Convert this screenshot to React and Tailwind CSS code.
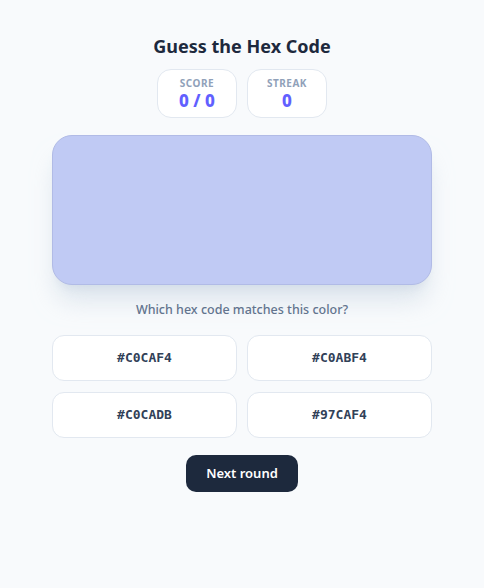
import React, { useState } from "react";

const options = ["#C0CAF4", "#C0ABF4", "#C0CADB", "#97CAF4"];

const Stat = ({ label, value }) => (
  <div className="w-20 h-[49px] bg-white border border-slate-200 rounded-[14px] flex flex-col items-center justify-center">
    <span className="text-[10px] leading-[14px] font-bold tracking-wider text-slate-400">
      {label}
    </span>
    <span className="text-[17px] leading-[21px] font-extrabold text-indigo-500">
      {value}
    </span>
  </div>
);

export default function App() {
  const [score] = useState({ correct: 0, total: 0, streak: 0 });

  return (
    <div
      className="min-h-[588px] bg-slate-50 flex flex-col items-center pt-8"
      style={{ fontFamily: '"Noto Sans", "Open Sans", sans-serif' }}
    >
      <h1 className="text-lg leading-7 font-bold text-slate-800">
        Guess the Hex Code
      </h1>

      <div className="flex gap-[10px] mt-[9px]">
        <Stat label="SCORE" value={`${score.correct} / ${score.total}`} />
        <Stat label="STREAK" value={score.streak} />
      </div>

      <div className="w-[380px] h-[150px] mt-[17px] rounded-[20px] bg-[#c0caf4] border border-[#b1bbe6] shadow-xl shadow-slate-300/60" />

      <p className="mt-[15px] text-[12.5px] leading-5 font-medium text-slate-500">
        Which hex code matches this color?
      </p>

      <div className="w-[380px] grid grid-cols-2 gap-x-[10px] gap-y-[11px] mt-[15px]">
        {options.map((hex) => (
          <button
            key={hex}
            className="h-[46px] bg-white border border-slate-200 rounded-xl text-[13px] font-bold text-slate-700"
            style={{ fontFamily: '"DejaVu Sans Mono", monospace' }}
          >
            {hex}
          </button>
        ))}
      </div>

      <button className="mt-[17px] w-28 h-[37px] rounded-[10px] bg-slate-800 text-white text-[13px] font-semibold">
        Next round
      </button>
    </div>
  );
}
